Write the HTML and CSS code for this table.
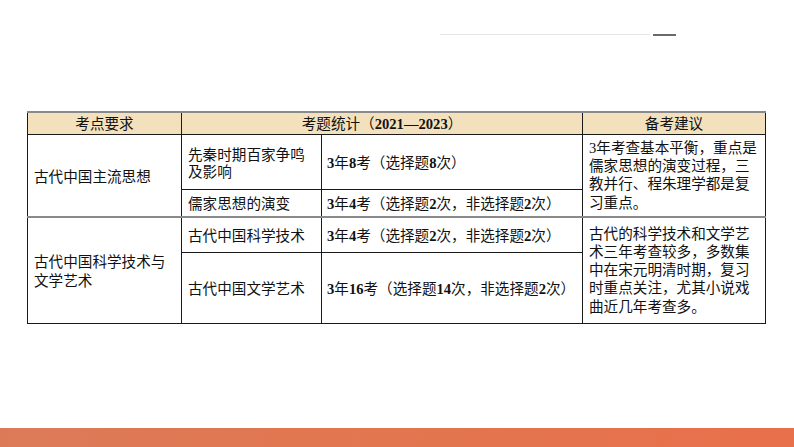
FILE: index.html
```html
<!DOCTYPE html>
<html lang="zh-CN">
<head>
<meta charset="utf-8">
<title>考点要求</title>
<link rel="stylesheet" href="styles.css">
</head>
<body>
<div class="page">
  <div class="deco">
    <span class="deco-line"></span>
    <span class="deco-mark"></span>
  </div>
  <table class="grid">
    <colgroup>
      <col class="c1"><col class="c2"><col class="c3"><col class="c4">
    </colgroup>
    <thead>
      <tr class="head">
        <th>考点要求</th>
        <th colspan="2">考题统计（<span class="n">2021—2023</span>）</th>
        <th>备考建议</th>
      </tr>
    </thead>
    <tbody class="grp">
      <tr class="r1">
        <td rowspan="2" class="k">古代中国主流思想</td>
        <td class="t">先秦时期百家争鸣及影响</td>
        <td class="s"><span class="n">3</span>年<span class="n">8</span>考（选择题<span class="n">8</span>次）</td>
        <td rowspan="2" class="a a1">3年考查基本平衡，重点是儒家思想的演变过程，三教并行、程朱理学都是复习重点。</td>
      </tr>
      <tr class="r2">
        <td class="t">儒家思想的演变</td>
        <td class="s"><span class="n">3</span>年<span class="n">4</span>考（选择题<span class="n">2</span>次，非选择题<span class="n">2</span>次）</td>
      </tr>
    </tbody>
    <tbody class="grp">
      <tr class="r3">
        <td rowspan="2" class="k">古代中国科学技术与文学艺术</td>
        <td class="t">古代中国科学技术</td>
        <td class="s"><span class="n">3</span>年<span class="n">4</span>考（选择题<span class="n">2</span>次，非选择题<span class="n">2</span>次）</td>
        <td rowspan="2" class="a a2">古代的科学技术和文学艺术三年考查较多，多数集中在宋元明清时期，复习时重点关注，尤其小说戏曲近几年考查多。</td>
      </tr>
      <tr class="r4">
        <td class="t">古代中国文学艺术</td>
        <td class="s"><span class="n">3</span>年<span class="n">16</span>考（选择题<span class="n">14</span>次，非选择题<span class="n">2</span>次）</td>
      </tr>
    </tbody>
  </table>
  <div class="foot"></div>
</div>
</body>
</html>
```
FILE: styles.css
```css
html, body {
  margin: 0;
  padding: 0;
  background: #ffffff;
}
.page {
  width: 794px;
  height: 447px;
  display: flex;
  flex-direction: column;
  overflow: hidden;
  font-family: "Noto Sans CJK SC", "Noto Sans", sans-serif;
  color: #111;
}
.deco {
  display: flex;
  align-items: center;
  height: 3px;
  margin-top: 33px;
  padding-left: 440px;
  gap: 3px;
}
.deco-line {
  width: 210px;
  height: 1px;
  background: #e6e6e6;
}
.deco-mark {
  width: 23px;
  height: 2px;
  background: #6a6a6a;
}
.grid {
  margin: 75px 0 0 27px;
  width: 738px;
  border-collapse: collapse;
  table-layout: fixed;
  font-size: 14.6px;
  line-height: 18px;
  border-top: 2px solid #8a8a8a;
  border-bottom: 1.5px solid #333;
  border-left: 1.5px solid #444;
  border-right: 1.5px solid #444;
}
.c1 { width: 154px; }
.c2 { width: 140px; }
.c3 { width: 261px; }
.c4 { width: 183px; }
.grid th, .grid td {
  border: 1px solid #1a1a1a;
  vertical-align: middle;
  padding: 0 6px;
  text-align: left;
}
.grid th {
  background: #f3e1bd;
  font-weight: 400;
  text-align: center;
}
.grp + .grp tr:first-child td {
  border-top: 2px solid #8a8a8a;
}
.head { height: 22px; }
.r1 { height: 55px; }
.r2 { height: 28px; }
.r3 { height: 35px; }
.r4 { height: 71px; }
.k {
  padding-left: 8px;
  line-height: 19px;
}
.t {
  text-align: justify;
  line-height: 17px;
  padding-top: 4px;
}
.grid td.s {
  padding: 2px 2px 0 5px;
  white-space: nowrap;
}
.a {
  text-align: justify;
  line-height: 18.3px;
  font-family: "Liberation Serif", "Noto Sans CJK SC", serif;
}
.a1 { padding-top: 6px; }
.a2 { padding-top: 5px; }
.n {
  font-family: "Liberation Serif", "Times New Roman", serif;
  font-weight: 700;
}
.foot {
  margin-top: auto;
  height: 19px;
  background: linear-gradient(90deg, #dc7a58 0%, #e2764f 50%, #e8704b 100%);
}
```
